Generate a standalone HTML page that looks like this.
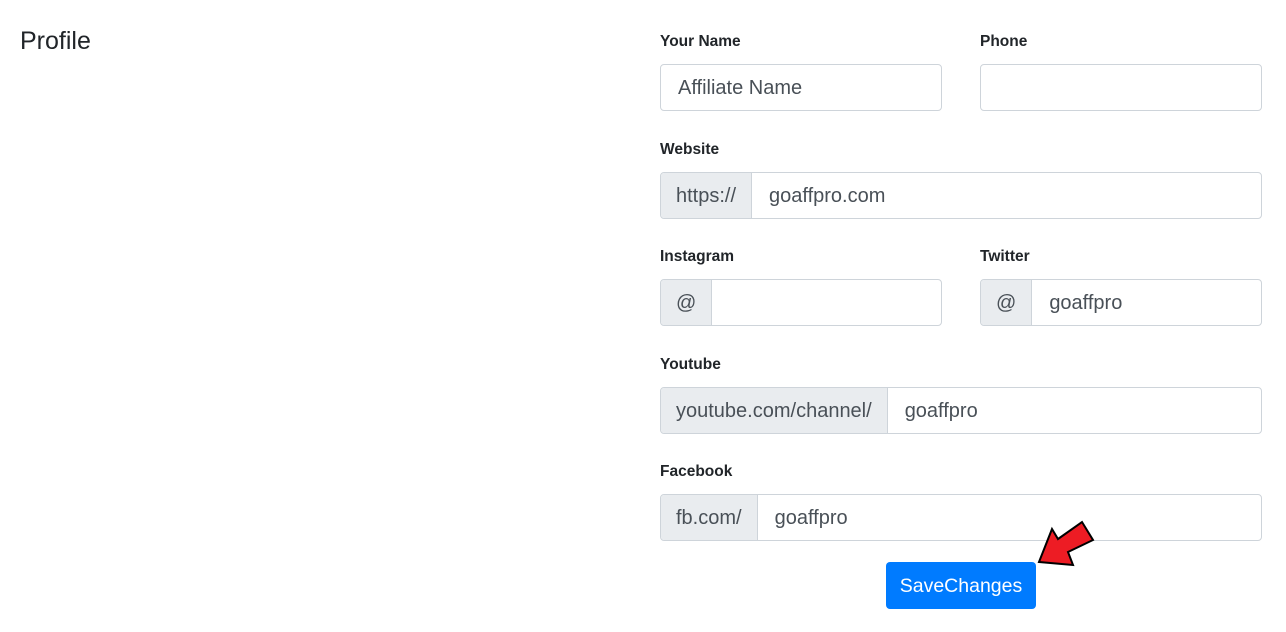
<!DOCTYPE html>
<html><head><style>
body{margin:0;width:1286px;height:632px;background:#fff;font-family:"Liberation Sans",sans-serif;position:relative;overflow:hidden;color:#212529}
.t{position:absolute;left:20px;top:27px;font-size:25px;}
.l{position:absolute;font-size:15.5px;font-weight:bold;}
.i{position:absolute;height:45px;border:1px solid #ced4da;border-radius:4px;display:flex;overflow:hidden;font-size:20px;color:#495057;box-sizing:content-box}
.p{background:#e9ecef;border-right:1px solid #ced4da;display:flex;align-items:center;padding:2px 15px 0;}
.v{display:flex;align-items:center;padding:2px 17px 0;}
.b{position:absolute;left:886px;top:562px;width:150px;height:47px;background:#007bff;border-radius:4px;color:#fff;font-size:19.5px;display:flex;align-items:center;justify-content:center;padding-top:2px;box-sizing:border-box}
</style></head><body>
<div class="t">Profile</div>
<div class="l" style="left:660px;top:33px">Your Name</div>
<div class="l" style="left:980px;top:33px">Phone</div>
<div class="i" style="left:660px;top:64px;width:280px"><div class="v">Affiliate Name</div></div>
<div class="i" style="left:980px;top:64px;width:280px"></div>
<div class="l" style="left:660px;top:141px">Website</div>
<div class="i" style="left:660px;top:172px;width:600px"><div class="p">https://</div><div class="v">goaffpro.com</div></div>
<div class="l" style="left:660px;top:248px">Instagram</div>
<div class="l" style="left:980px;top:248px">Twitter</div>
<div class="i" style="left:660px;top:279px;width:280px"><div class="p">@</div></div>
<div class="i" style="left:980px;top:279px;width:280px"><div class="p">@</div><div class="v">goaffpro</div></div>
<div class="l" style="left:660px;top:356px">Youtube</div>
<div class="i" style="left:660px;top:387px;width:600px"><div class="p">youtube.com/channel/</div><div class="v">goaffpro</div></div>
<div class="l" style="left:660px;top:463px">Facebook</div>
<div class="i" style="left:660px;top:494px;width:600px"><div class="p">fb.com/</div><div class="v">goaffpro</div></div>
<div class="b">SaveChanges</div>
<svg style="position:absolute;left:0;top:0" width="1286" height="632"><polygon points="1039,562 1073,565 1068,552 1093,540 1082,522 1058,539 1052,529" fill="#ed1c24" stroke="#000" stroke-width="2" stroke-linejoin="miter"/></svg>
</body></html>
